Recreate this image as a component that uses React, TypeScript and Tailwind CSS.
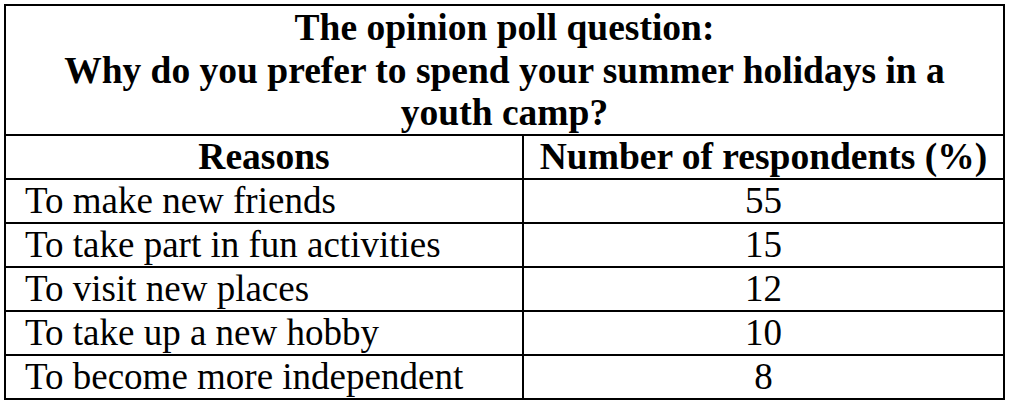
import React from "react";

const rows: [string, string][] = [
  ["To make new friends", "55"],
  ["To take part in fun activities", "15"],
  ["To visit new places", "12"],
  ["To take up a new hobby", "10"],
  ["To become more independent", "8"],
];

export default function App() {
  return (
    <div className="w-[1010px] h-[404px] bg-white pt-[4px] pl-[4px] text-black" style={{ fontFamily: '"Liberation Serif", "Times New Roman", serif' }}>
      <div className="w-[1001px] border-2 border-black">
        <div className="h-[130px] border-b-2 border-black flex flex-col items-center justify-center text-[37.5px] font-bold leading-[42.5px] text-center whitespace-nowrap pt-[2px]">
          <div>The opinion poll question:</div>
          <div>Why do you prefer to spend your summer holidays in a</div>
          <div>youth camp?</div>
        </div>
        <div className="grid grid-cols-[518px_1fr] h-[44px] border-b-2 border-black text-[37.5px] font-bold leading-[42px]">
          <div className="border-r-2 border-black text-center">Reasons</div>
          <div className="text-center">Number of respondents (%)</div>
        </div>
        {rows.map(([r, n], i) => (
          <div
            key={r}
            className={
              i < rows.length - 1
                ? "grid grid-cols-[518px_1fr] h-[44px] border-b-2 border-black text-[37px] leading-[42px]"
                : "grid grid-cols-[518px_1fr] h-[42px] text-[37px] leading-[42px]"
            }
          >
            <div className="border-r-2 border-black pl-[19px]">{r}</div>
            <div className="text-center">{n}</div>
          </div>
        ))}
      </div>
    </div>
  );
}
